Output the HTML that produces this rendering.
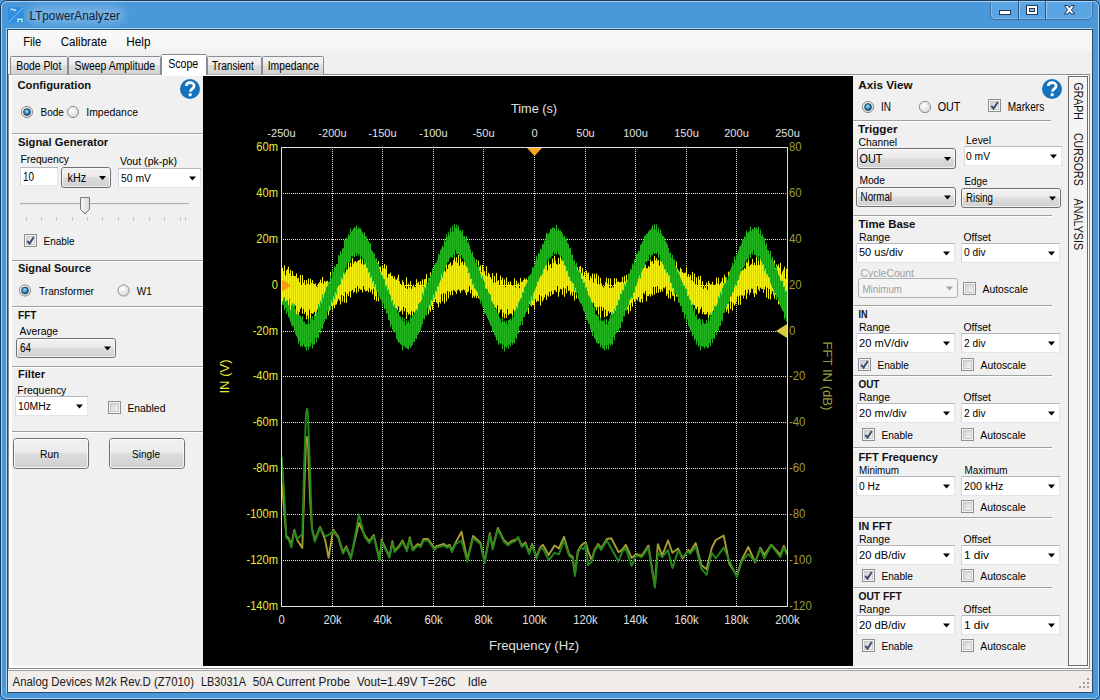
<!DOCTYPE html>
<html><head><meta charset="utf-8"><title>LTpowerAnalyzer</title>
<style>html,body{margin:0;padding:0;width:1100px;height:700px;overflow:hidden;background:#4a98da;}
svg{display:block;font-family:"Liberation Sans",sans-serif;}</style></head>
<body><svg width="1100" height="700" viewBox="0 0 1100 700">
<defs>
<linearGradient id="gbtn" x1="0" y1="0" x2="0" y2="1"><stop offset="0" stop-color="#f2f2f2"/><stop offset="0.45" stop-color="#ebebeb"/><stop offset="0.5" stop-color="#dddddd"/><stop offset="1" stop-color="#cfcfcf"/></linearGradient>
<linearGradient id="gchk" x1="0" y1="0" x2="1" y2="1"><stop offset="0" stop-color="#cbcfd5"/><stop offset="1" stop-color="#f6f6f6"/></linearGradient>
<radialGradient id="grad_rb" cx="0.4" cy="0.35" r="0.7"><stop offset="0" stop-color="#ffffff"/><stop offset="1" stop-color="#d4d4d4"/></radialGradient>
<radialGradient id="grad_rdot" cx="0.45" cy="0.4" r="0.6"><stop offset="0" stop-color="#a6e0fa"/><stop offset="0.55" stop-color="#3f93c4"/><stop offset="1" stop-color="#0f3a5e"/></radialGradient>
<linearGradient id="gtitle" x1="0" y1="0" x2="0" y2="1"><stop offset="0" stop-color="#5aa2de"/><stop offset="0.5" stop-color="#4a98da"/><stop offset="1" stop-color="#4896d8"/></linearGradient>
<linearGradient id="gtab" x1="0" y1="0" x2="0" y2="1"><stop offset="0" stop-color="#f2f2f2"/><stop offset="0.5" stop-color="#ebebeb"/><stop offset="0.5" stop-color="#dddddd"/><stop offset="1" stop-color="#cfcfcf"/></linearGradient>
<filter id="blur4" x="-30%" y="-60%" width="160%" height="220%"><feGaussianBlur stdDeviation="4"/></filter><linearGradient id="gmenu" x1="0" y1="0" x2="0" y2="1"><stop offset="0" stop-color="#f8f8f8"/><stop offset="0.7" stop-color="#f6f6f6"/><stop offset="1" stop-color="#eeeeee"/></linearGradient><linearGradient id="gtab2" x1="0" y1="0" x2="0" y2="1"><stop offset="0" stop-color="#f3f3f3"/><stop offset="0.5" stop-color="#ebebeb"/><stop offset="0.5" stop-color="#dedede"/><stop offset="1" stop-color="#d1d1d1"/></linearGradient><linearGradient id="gthumb" x1="0" y1="0" x2="1" y2="0"><stop offset="0" stop-color="#f8f8f8"/><stop offset="1" stop-color="#d8d8d8"/></linearGradient>
</defs>
<rect x="0" y="0" width="1100" height="700" fill="#4a98da"/>
<rect x="0.5" y="0.5" width="1099" height="699" rx="6" fill="#4a97d9" stroke="#1b3a58"/>
<rect x="1.5" y="1.5" width="1097" height="697" rx="5" fill="none" stroke="#a9d3f5"/>
<rect x="6.5" y="28.5" width="1086" height="664" fill="none" stroke="#a9d3f5"/>
<rect x="7.5" y="29.5" width="1084" height="662" fill="none" stroke="#2a4c6b"/>
<rect x="8" y="30" width="1084" height="662" fill="#f0f0f0"/>
<rect x="8" y="7" width="16" height="16" fill="#2f8ee2"/>
<path d="M8.5,22.5 L23.5,7.5" stroke="#7cc4ff" stroke-width="1"/>
<path d="M10.5,9.8 q1.5,-1.2 3,0 q1.2,1 2.5,0" stroke="#d8f4e8" stroke-width="1.2" fill="none"/>
<rect x="17" y="18.6" width="6" height="1.5" fill="#b8f8dc"/><rect x="17" y="20.8" width="2" height="1.3" fill="#b8f8dc"/><rect x="21" y="20.8" width="2" height="1.3" fill="#b8f8dc"/>
<rect x="28" y="7" width="96" height="16" rx="8" fill="#9ccbf0" opacity="0.55" filter="url(#blur4)"/>
<text x="29.50" y="19.50" font-size="13.08" fill="#101c2c" textLength="90.53" lengthAdjust="spacingAndGlyphs">LTpowerAnalyzer</text>
<path d="M990.5,2 V14 q0,5.5 5.5,5.5 H1087 q5.5,0 5.5,-5.5 V2" fill="#5aa4e4" stroke="#2b5679" stroke-opacity="0.6"/>
<path d="M991.5,2 V14 q0,4.5 4.5,4.5 H1087 q4.5,0 4.5,-4.5 V2" fill="none" stroke="#9ccaef" stroke-opacity="0.6"/>
<rect x="1018" y="1" width="1" height="18" fill="#2b5679"/>
<rect x="1019" y="1" width="1" height="18" fill="#9ccaef"/>
<rect x="1045" y="1" width="1" height="18" fill="#2b5679"/>
<rect x="1046" y="1" width="1" height="18" fill="#9ccaef"/>
<rect x="999.5" y="10.5" width="11" height="4" fill="#fff" stroke="#253a55"/>
<rect x="1026.5" y="5.5" width="11" height="9" fill="#fff" stroke="#253a55"/>
<rect x="1029.5" y="8.5" width="5" height="3" fill="#9fb5d0" stroke="#253a55"/>
<path d="M1064.5,5.5 H1068 L1069.5,7.8 L1071,5.5 H1074.5 L1071.4,9.8 L1074.5,14 H1071 L1069.5,11.8 L1068,14 H1064.5 L1067.6,9.8 Z" fill="#fff" stroke="#253a55" stroke-width="1"/>
<rect x="8" y="30" width="1084" height="25" fill="url(#gmenu)"/>
<text x="23.25" y="46.25" font-size="13.08" fill="#000" textLength="18.02" lengthAdjust="spacingAndGlyphs">File</text>
<text x="60.75" y="46.25" font-size="13.08" fill="#000" textLength="46.27" lengthAdjust="spacingAndGlyphs">Calibrate</text>
<text x="126.25" y="46.25" font-size="13.08" fill="#000" textLength="24.27" lengthAdjust="spacingAndGlyphs">Help</text>
<rect x="8.5" y="74.5" width="1081" height="594" fill="#ffffff" stroke="#898c95"/>
<path d="M10.5,74.5 V57.5 q0,-1 1,-1 H66.5 q1,0 1,1 V74.5" fill="url(#gtab2)" stroke="#898c95"/>
<text x="16.25" y="70.00" font-size="13.08" fill="#000" textLength="45.02" lengthAdjust="spacingAndGlyphs">Bode Plot</text>
<path d="M68.5,74.5 V57.5 q0,-1 1,-1 H159.5 q1,0 1,1 V74.5" fill="url(#gtab2)" stroke="#898c95"/>
<text x="74.50" y="70.00" font-size="13.08" fill="#000" textLength="80.52" lengthAdjust="spacingAndGlyphs">Sweep Amplitude</text>
<path d="M207.5,74.5 V57.5 q0,-1 1,-1 H260.5 q1,0 1,1 V74.5" fill="url(#gtab2)" stroke="#898c95"/>
<text x="212.00" y="70.00" font-size="13.08" fill="#000" textLength="41.77" lengthAdjust="spacingAndGlyphs">Transient</text>
<path d="M262.5,74.5 V57.5 q0,-1 1,-1 H322.5 q1,0 1,1 V74.5" fill="url(#gtab2)" stroke="#898c95"/>
<text x="267.70" y="70.00" font-size="13.08" fill="#000" textLength="51.28" lengthAdjust="spacingAndGlyphs">Impedance</text>
<path d="M161.5,75 V55.5 q0,-1 1,-1 H205.5 q1,0 1,1 V75" fill="#ffffff" stroke="#898c95"/>
<text x="168.25" y="68.00" font-size="13.08" fill="#000" textLength="30.01" lengthAdjust="spacingAndGlyphs">Scope</text>
<rect x="12" y="76" width="191" height="590" fill="#f0f0f0"/>
<text x="17.50" y="89.25" font-size="11.63" font-weight="bold" fill="#111" textLength="73.74" lengthAdjust="spacingAndGlyphs">Configuration</text>
<circle cx="190" cy="89" r="10" fill="#1a72b8"/>
<circle cx="190" cy="89" r="9" fill="#1673bb"/>
<path d="M186.3,86.1 C186.3,81.6 194.1,81.6 194.1,85.9 C194.1,88.6 190.5,89.1 190.3,91.7" fill="none" stroke="#fff" stroke-width="2.7" stroke-linecap="butt"/>
<rect x="188.7" y="93.2" width="3" height="3" rx="0.6" fill="#fff"/>
<circle cx="27" cy="112" r="5.6" fill="url(#grad_rb)" stroke="#8f8f8f" stroke-width="1"/>
<circle cx="27" cy="112" r="3.4" fill="url(#grad_rdot)" stroke="#123c5e" stroke-width="0.8"/>
<text x="40.50" y="116.25" font-size="11.63" fill="#000" textLength="23.26" lengthAdjust="spacingAndGlyphs">Bode</text>
<circle cx="73" cy="112" r="5.6" fill="url(#grad_rb)" stroke="#8f8f8f" stroke-width="1"/>
<text x="86.25" y="116.25" font-size="11.63" fill="#000" textLength="51.73" lengthAdjust="spacingAndGlyphs">Impedance</text>
<rect x="12" y="133" width="191" height="1" fill="#a0a0a0"/>
<rect x="12" y="134" width="191" height="1" fill="#ffffff"/>
<text x="18.00" y="145.50" font-size="10.90" font-weight="bold" fill="#111" textLength="90.22" lengthAdjust="spacingAndGlyphs">Signal Generator</text>
<text x="20.50" y="162.50" font-size="11.63" fill="#000" textLength="48.50" lengthAdjust="spacingAndGlyphs">Frequency</text>
<text x="120.00" y="165.00" font-size="11.63" fill="#000" textLength="57.01" lengthAdjust="spacingAndGlyphs">Vout (pk-pk)</text>
<rect x="20" y="167" width="38" height="19" fill="#ffffff"/>
<rect x="20.5" y="167.5" width="37" height="18" fill="none" stroke="#e3e5ea"/>
<rect x="20" y="167" width="38" height="1" fill="#b4b6bc"/>
<rect x="20" y="167" width="1" height="19" fill="#d6d8dd"/>
<text x="23.00" y="181.00" font-size="12.35" fill="#000" textLength="11.02" lengthAdjust="spacingAndGlyphs">10</text>
<rect x="61.5" y="167.5" width="49" height="20" rx="2.5" fill="url(#gbtn)" stroke="#707070"/>
<rect x="62.5" y="168.5" width="47" height="18" rx="1.5" fill="none" stroke="#fcfcfc" stroke-opacity="0.7"/>
<path d="M99.0,176.0 h7 l-3.5,4 z" fill="#000"/>
<text x="67.50" y="181.50" font-size="12.35" fill="#000" textLength="18.52" lengthAdjust="spacingAndGlyphs">kHz</text>
<rect x="118" y="168" width="83" height="20" fill="#ffffff"/>
<rect x="118.5" y="168.5" width="82" height="19" fill="none" stroke="#e3e5ea"/>
<rect x="118" y="168" width="83" height="1" fill="#b4b6bc"/>
<rect x="118" y="168" width="1" height="20" fill="#d6d8dd"/>
<path d="M189.0,176.5 h7 l-3.5,4 z" fill="#000"/>
<text x="121.00" y="182.00" font-size="11.63" fill="#000" textLength="30.00" lengthAdjust="spacingAndGlyphs">50 mV</text>
<rect x="20" y="203" width="169" height="1" fill="#b0b0b0"/>
<rect x="20" y="204" width="169" height="1" fill="#e8e8e8"/>
<path d="M80.5,197.5 h9 v12 l-4.5,4.5 l-4.5,-4.5 z" fill="url(#gthumb)" stroke="#777"/>
<rect x="26" y="217" width="1" height="4" fill="#c4c4c4"/>
<rect x="41" y="217" width="1" height="4" fill="#c4c4c4"/>
<rect x="56" y="217" width="1" height="4" fill="#c4c4c4"/>
<rect x="72" y="217" width="1" height="4" fill="#c4c4c4"/>
<rect x="87" y="217" width="1" height="4" fill="#c4c4c4"/>
<rect x="102" y="217" width="1" height="4" fill="#c4c4c4"/>
<rect x="118" y="217" width="1" height="4" fill="#c4c4c4"/>
<rect x="133" y="217" width="1" height="4" fill="#c4c4c4"/>
<rect x="149" y="217" width="1" height="4" fill="#c4c4c4"/>
<rect x="164" y="217" width="1" height="4" fill="#c4c4c4"/>
<rect x="180" y="217" width="1" height="4" fill="#c4c4c4"/>
<rect x="185" y="217" width="1" height="4" fill="#c4c4c4"/>
<rect x="24.5" y="234.5" width="12" height="12" fill="#f4f4f4" stroke="#8f8f8f"/>
<rect x="26.5" y="236.5" width="8" height="8" fill="url(#gchk)" stroke="#c9c9c9" stroke-width="1"/>
<path d="M27.3,240.8 L29.6,243.6 L33.8,237" fill="none" stroke="#3a4a70" stroke-width="1.9"/>
<text x="43.50" y="245.00" font-size="11.63" fill="#000" textLength="30.99" lengthAdjust="spacingAndGlyphs">Enable</text>
<rect x="12" y="260" width="191" height="1" fill="#a0a0a0"/>
<rect x="12" y="261" width="191" height="1" fill="#ffffff"/>
<text x="18.00" y="272.00" font-size="10.90" font-weight="bold" fill="#111" textLength="72.98" lengthAdjust="spacingAndGlyphs">Signal Source</text>
<circle cx="25" cy="290.5" r="5.6" fill="url(#grad_rb)" stroke="#8f8f8f" stroke-width="1"/>
<circle cx="25" cy="290.5" r="3.4" fill="url(#grad_rdot)" stroke="#123c5e" stroke-width="0.8"/>
<text x="39.00" y="294.50" font-size="11.63" fill="#000" textLength="54.98" lengthAdjust="spacingAndGlyphs">Transformer</text>
<circle cx="123.6" cy="290.5" r="5.6" fill="url(#grad_rb)" stroke="#8f8f8f" stroke-width="1"/>
<text x="136.80" y="294.50" font-size="11.63" fill="#000" textLength="15.00" lengthAdjust="spacingAndGlyphs">W1</text>
<rect x="12" y="306" width="191" height="1" fill="#a0a0a0"/>
<rect x="12" y="307" width="191" height="1" fill="#ffffff"/>
<text x="18.00" y="319.00" font-size="10.90" font-weight="bold" fill="#111" textLength="18.48" lengthAdjust="spacingAndGlyphs">FFT</text>
<text x="19.50" y="334.80" font-size="11.63" fill="#000" textLength="38.52" lengthAdjust="spacingAndGlyphs">Average</text>
<rect x="16.5" y="338.5" width="99" height="19" rx="2.5" fill="url(#gbtn)" stroke="#707070"/>
<rect x="17.5" y="339.5" width="97" height="17" rx="1.5" fill="none" stroke="#fcfcfc" stroke-opacity="0.7"/>
<path d="M104.0,346.5 h7 l-3.5,4 z" fill="#000"/>
<text x="20.00" y="352.00" font-size="12.35" fill="#000" textLength="11.02" lengthAdjust="spacingAndGlyphs">64</text>
<rect x="12" y="366" width="191" height="1" fill="#a0a0a0"/>
<rect x="12" y="367" width="191" height="1" fill="#ffffff"/>
<text x="18.00" y="378.00" font-size="10.90" font-weight="bold" fill="#111" textLength="27.00" lengthAdjust="spacingAndGlyphs">Filter</text>
<text x="17.30" y="393.60" font-size="11.63" fill="#000" textLength="49.00" lengthAdjust="spacingAndGlyphs">Frequency</text>
<rect x="15" y="396" width="73" height="20" fill="#ffffff"/>
<rect x="15.5" y="396.5" width="72" height="19" fill="none" stroke="#e3e5ea"/>
<rect x="15" y="396" width="73" height="1" fill="#b4b6bc"/>
<rect x="15" y="396" width="1" height="20" fill="#d6d8dd"/>
<path d="M76.0,404.5 h7 l-3.5,4 z" fill="#000"/>
<text x="18.00" y="410.00" font-size="11.63" fill="#000" textLength="32.97" lengthAdjust="spacingAndGlyphs">10MHz</text>
<rect x="108.5" y="401.5" width="12" height="12" fill="#f4f4f4" stroke="#8f8f8f"/>
<rect x="110.5" y="403.5" width="8" height="8" fill="url(#gchk)" stroke="#c9c9c9" stroke-width="1"/>
<text x="127.40" y="412.00" font-size="11.63" fill="#000" textLength="38.00" lengthAdjust="spacingAndGlyphs">Enabled</text>
<rect x="12" y="431" width="191" height="1" fill="#a0a0a0"/>
<rect x="12" y="432" width="191" height="1" fill="#ffffff"/>
<rect x="13.5" y="438.5" width="75" height="30" rx="3" fill="url(#gbtn)" stroke="#707070"/>
<rect x="14.5" y="439.5" width="73" height="28" rx="2" fill="none" stroke="#fcfcfc" stroke-opacity="0.8"/>
<text x="40.00" y="457.50" font-size="11.63" fill="#000" textLength="19.00" lengthAdjust="spacingAndGlyphs">Run</text>
<rect x="109.5" y="438.5" width="75" height="30" rx="3" fill="url(#gbtn)" stroke="#707070"/>
<rect x="110.5" y="439.5" width="73" height="28" rx="2" fill="none" stroke="#fcfcfc" stroke-opacity="0.8"/>
<text x="132.00" y="457.50" font-size="11.63" fill="#000" textLength="28.00" lengthAdjust="spacingAndGlyphs">Single</text>
<rect x="203" y="76" width="650" height="590" fill="#000000"/>
<path d="M332.5,147 V606 M382.5,147 V606 M433.5,147 V606 M483.5,147 V606 M534.5,147 V606 M585.5,147 V606 M635.5,147 V606 M686.5,147 V606 M736.5,147 V606 M281,193.5 H787 M281,239.5 H787 M281,285.5 H787 M281,331.5 H787 M281,376.5 H787 M281,422.5 H787 M281,468.5 H787 M281,514.5 H787 M281,560.5 H787" stroke="#e8e8e8" stroke-width="1" stroke-dasharray="1,1" fill="none"/>
<clipPath id="plotclip"><rect x="281" y="147" width="507" height="460"/></clipPath>
<g clip-path="url(#plotclip)">
<path d="M282.5,267.9V301.1M284.5,265.6V297.1M286.5,270.6V300.9M288.5,266.8V305.0M290.5,270.0V309.8M292.5,271.2V303.1M294.5,276.1V303.9M296.5,273.6V314.2M298.5,277.9V314.8M300.5,274.9V308.8M302.5,275.3V313.8M304.5,280.0V314.1M306.5,280.1V319.3M308.5,278.4V320.5M310.5,278.8V320.6M312.5,280.2V313.9M314.5,284.2V311.8M316.5,286.5V319.3M318.5,283.4V318.7M320.5,279.7V310.4M322.5,276.8V319.1M324.5,280.9V309.4M326.5,281.1V312.4M328.5,282.2V315.2M330.5,272.1V309.6M332.5,272.7V310.3M334.5,268.9V308.1M336.5,273.7V304.5M338.5,269.1V298.9M340.5,273.9V304.5M342.5,265.4V301.7M344.5,263.3V302.6M346.5,262.2V303.0M348.5,261.7V296.1M350.5,262.7V297.6M352.5,258.1V289.9M354.5,261.5V291.9M356.5,262.3V293.4M358.5,260.3V291.8M360.5,255.2V289.6M362.5,254.9V292.4M364.5,257.9V289.7M366.5,261.7V291.0M368.5,256.1V292.2M370.5,256.8V292.1M372.5,260.8V294.3M374.5,267.3V299.9M376.5,262.6V301.1M378.5,261.0V301.4M380.5,266.6V298.3M382.5,265.0V299.2M384.5,263.9V304.5M386.5,265.4V305.0M388.5,273.8V303.8M390.5,272.6V311.0M392.5,275.8V311.8M394.5,276.2V307.0M396.5,279.6V314.0M398.5,274.6V306.4M400.5,283.8V311.5M402.5,280.3V314.5M404.5,285.6V311.4M406.5,277.2V319.1M408.5,283.5V314.7M410.5,281.2V315.5M412.5,286.3V317.4M414.5,286.8V313.4M416.5,279.2V315.4M418.5,281.8V314.9M420.5,281.2V317.3M422.5,279.3V316.5M424.5,279.3V317.1M426.5,274.1V315.3M428.5,280.3V314.3M430.5,272.3V311.7M432.5,277.8V309.7M434.5,269.5V302.0M436.5,267.2V302.5M438.5,273.0V307.3M440.5,263.6V303.6M442.5,263.6V301.5M444.5,262.4V303.6M446.5,262.7V301.4M448.5,264.6V298.4M450.5,262.3V295.3M452.5,264.8V295.3M454.5,257.2V290.8M456.5,257.2V293.9M458.5,255.0V289.5M460.5,254.7V293.1M462.5,261.4V290.5M464.5,260.0V290.3M466.5,260.5V295.2M468.5,258.2V291.6M470.5,259.8V293.6M472.5,262.1V298.0M474.5,261.5V297.5M476.5,259.7V298.3M478.5,260.7V298.1M480.5,265.3V297.7M482.5,264.9V305.7M484.5,271.2V300.9M486.5,266.4V308.3M488.5,272.8V305.7M490.5,277.0V310.8M492.5,273.2V310.9M494.5,275.9V310.6M496.5,272.9V311.0M498.5,280.1V314.6M500.5,275.5V309.7M502.5,277.6V317.3M504.5,279.4V318.4M506.5,277.5V317.9M508.5,281.9V315.2M510.5,281.5V313.5M512.5,285.5V320.2M514.5,278.3V312.9M516.5,280.6V316.9M518.5,282.7V312.5M520.5,277.9V315.7M522.5,281.6V313.3M524.5,278.1V310.8M526.5,278.6V311.4M528.5,277.1V314.0M530.5,278.7V305.4M532.5,276.1V305.0M534.5,268.6V308.9M536.5,270.7V302.1M538.5,271.4V301.2M540.5,264.2V305.6M542.5,264.9V301.5M544.5,262.4V297.4M546.5,261.8V300.1M548.5,260.2V296.8M550.5,263.8V296.1M552.5,258.5V294.4M554.5,255.8V290.2M556.5,263.9V292.2M558.5,257.9V296.7M560.5,256.4V288.9M562.5,254.6V294.8M564.5,255.7V296.8M566.5,256.4V293.5M568.5,264.0V291.1M570.5,258.1V295.4M572.5,262.7V295.7M574.5,265.2V300.5M576.5,264.2V298.6M578.5,270.7V296.6M580.5,266.0V297.9M582.5,268.0V299.0M584.5,272.1V303.9M586.5,270.5V304.7M588.5,272.5V306.1M590.5,276.0V304.0M592.5,273.4V308.4M594.5,273.9V309.0M596.5,273.5V310.5M598.5,275.6V314.8M600.5,277.8V318.5M602.5,286.0V310.8M604.5,286.2V317.4M606.5,277.6V316.3M608.5,278.3V311.2M610.5,278.4V312.2M612.5,286.3V315.8M614.5,278.1V313.2M616.5,278.4V316.7M618.5,281.4V312.9M620.5,282.1V311.4M622.5,276.9V312.9M624.5,275.8V307.1M626.5,274.9V307.3M628.5,273.8V313.7M630.5,270.3V311.1M632.5,277.1V306.7M634.5,270.0V301.8M636.5,271.8V299.3M638.5,266.9V297.0M640.5,269.1V302.2M642.5,263.8V302.7M644.5,266.9V294.1M646.5,268.1V301.5M648.5,265.9V296.1M650.5,259.2V296.7M652.5,261.0V295.5M654.5,256.0V294.7M656.5,258.1V293.0M658.5,259.7V292.9M660.5,256.1V292.1M662.5,261.1V291.6M664.5,259.1V288.6M666.5,255.2V295.8M668.5,258.5V298.2M670.5,256.5V298.8M672.5,258.8V295.5M674.5,264.3V301.2M676.5,261.5V296.8M678.5,270.3V302.3M680.5,267.7V303.7M682.5,272.1V301.1M684.5,272.9V306.9M686.5,266.7V309.3M688.5,274.0V307.3M690.5,275.0V312.1M692.5,271.8V313.1M694.5,273.8V305.6M696.5,277.3V309.4M698.5,276.4V313.7M700.5,275.8V309.3M702.5,281.2V314.1M704.5,285.8V314.4M706.5,282.5V314.2M708.5,280.9V318.4M710.5,284.7V312.9M712.5,281.8V319.6M714.5,285.1V310.5M716.5,277.6V315.7M718.5,277.6V316.3M720.5,282.9V311.2M722.5,277.9V312.7M724.5,274.6V312.1M726.5,277.7V311.5M728.5,271.7V313.5M730.5,272.4V309.0M732.5,269.7V310.5M734.5,271.3V305.7M736.5,267.2V300.8M738.5,268.2V305.3M740.5,261.8V304.8M742.5,266.4V295.6M744.5,267.8V295.5M746.5,261.6V299.2M748.5,258.1V289.7M750.5,264.9V292.7M752.5,258.8V288.9M754.5,262.5V297.0M756.5,256.8V294.5M758.5,255.9V289.5M760.5,255.0V287.6M762.5,259.4V288.8M764.5,260.8V289.5M766.5,260.5V297.6M768.5,256.1V299.0M770.5,262.0V299.6M772.5,263.5V291.0M774.5,260.3V298.7M776.5,264.5V299.7M778.5,264.5V304.4M780.5,262.9V305.1M782.5,271.4V298.5M784.5,266.6V301.0M786.5,268.8V310.9" stroke="#f8f212" stroke-width="1" fill="none"/>
<path d="M283.5,271.2V298.0M285.5,275.6V301.4M287.5,269.2V300.0M289.5,273.5V298.9M291.5,276.0V305.2M293.5,275.6V305.4M295.5,276.1V305.9M297.5,278.7V310.8M299.5,282.1V312.1M301.5,285.8V307.4M303.5,282.8V309.0M305.5,285.9V312.0M307.5,283.9V315.4M309.5,284.5V309.7M311.5,283.0V313.2M313.5,283.7V313.2M315.5,283.3V316.5M317.5,286.6V309.5M319.5,282.3V308.2M321.5,282.8V309.9M323.5,283.7V314.5M325.5,281.9V305.8M327.5,280.7V305.7M329.5,281.8V310.9M331.5,279.2V306.1M333.5,277.0V305.5M335.5,276.5V304.8M337.5,270.6V301.7M339.5,273.6V300.7M341.5,270.4V295.0M343.5,268.6V295.9M345.5,272.5V292.1M347.5,269.4V293.9M349.5,267.3V291.6M351.5,266.7V291.0M353.5,263.7V292.9M355.5,261.1V288.1M357.5,261.3V286.3M359.5,259.9V288.5M361.5,263.7V290.0M363.5,264.6V285.6M365.5,260.0V291.6M367.5,260.3V290.4M369.5,266.2V288.2M371.5,265.1V289.9M373.5,261.3V288.7M375.5,262.6V296.4M377.5,263.3V291.5M379.5,266.7V295.1M381.5,271.5V292.9M383.5,268.3V294.2M385.5,268.8V302.5M387.5,277.7V302.8M389.5,274.0V302.5M391.5,275.9V302.6M393.5,278.4V307.5M395.5,279.4V309.2M397.5,277.6V310.4M399.5,281.1V312.0M401.5,285.1V310.3M403.5,282.0V306.9M405.5,288.0V308.2M407.5,288.9V312.2M409.5,287.2V313.7M411.5,288.8V311.3M413.5,284.6V311.7M415.5,287.1V313.4M417.5,283.2V313.2M419.5,285.1V313.3M421.5,284.6V308.9M423.5,286.8V309.5M425.5,278.7V308.1M427.5,283.0V307.7M429.5,278.4V309.8M431.5,276.5V305.9M433.5,280.9V301.1M435.5,278.7V299.2M437.5,277.7V303.7M439.5,270.9V302.1M441.5,268.5V294.2M443.5,267.7V293.3M445.5,271.6V293.7M447.5,268.9V291.2M449.5,263.7V291.7M451.5,265.9V290.9M453.5,260.1V289.9M455.5,261.7V291.9M457.5,262.9V290.4M459.5,265.7V290.9M461.5,262.8V290.4M463.5,264.8V289.4M465.5,261.0V292.7M467.5,263.6V292.3M469.5,265.7V286.3M471.5,266.8V289.8M473.5,267.9V295.8M475.5,266.4V295.7M477.5,267.4V296.0M479.5,266.7V299.2M481.5,272.1V298.7M483.5,268.5V296.4M485.5,275.4V301.6M487.5,276.4V304.4M489.5,274.1V299.6M491.5,279.1V303.3M493.5,282.8V304.5M495.5,282.5V307.9M497.5,281.1V305.3M499.5,285.8V312.6M501.5,280.1V309.4M503.5,286.2V312.7M505.5,287.2V313.9M507.5,285.5V309.2M509.5,284.4V314.0M511.5,285.2V313.7M513.5,285.0V309.6M515.5,287.3V314.2M517.5,284.2V311.7M519.5,288.2V313.1M521.5,282.0V309.5M523.5,279.9V306.0M525.5,279.6V307.5M527.5,280.2V309.7M529.5,282.3V304.3M531.5,275.5V306.6M533.5,276.9V305.3M535.5,274.0V299.0M537.5,273.0V300.8M539.5,269.5V295.0M541.5,266.7V296.4M543.5,267.8V299.7M545.5,264.7V294.4M547.5,270.4V295.4M549.5,265.1V291.8M551.5,268.1V291.1M553.5,263.1V294.0M555.5,260.7V290.6M557.5,264.8V285.7M559.5,263.8V291.8M561.5,259.5V289.5M563.5,260.5V287.6M565.5,259.8V288.7M567.5,266.3V286.0M569.5,266.5V290.4M571.5,265.2V292.5M573.5,263.4V291.5M575.5,264.8V292.4M577.5,267.0V292.5M579.5,266.8V293.3M581.5,272.9V294.9M583.5,275.8V295.9M585.5,277.0V296.7M587.5,273.4V298.5M589.5,280.3V307.3M591.5,278.2V302.3M593.5,282.4V302.8M595.5,278.4V307.4M597.5,284.0V307.0M599.5,284.3V306.6M601.5,283.3V306.8M603.5,287.5V307.8M605.5,282.3V309.7M607.5,283.5V315.8M609.5,287.8V313.5M611.5,288.0V315.5M613.5,287.4V314.0M615.5,283.8V314.1M617.5,281.8V310.7M619.5,282.2V311.0M621.5,281.7V311.1M623.5,282.6V306.5M625.5,281.5V310.3M627.5,282.1V309.7M629.5,275.6V305.2M631.5,278.5V303.1M633.5,272.0V299.5M635.5,277.5V302.4M637.5,275.4V300.8M639.5,273.3V301.9M641.5,270.3V299.0M643.5,268.0V292.8M645.5,264.4V290.9M647.5,268.3V295.9M649.5,267.1V294.3M651.5,261.9V293.8M653.5,263.8V286.9M655.5,260.3V287.0M657.5,260.7V285.6M659.5,265.8V289.1M661.5,261.2V289.6M663.5,258.5V287.6M665.5,265.1V286.7M667.5,260.3V293.9M669.5,263.8V290.1M671.5,261.3V291.6M673.5,261.9V296.2M675.5,269.6V290.7M677.5,268.2V296.4M679.5,271.5V296.2M681.5,269.1V296.5M683.5,273.3V296.3M685.5,272.5V305.0M687.5,276.7V300.0M689.5,276.9V304.5M691.5,280.3V305.3M693.5,281.6V304.9M695.5,284.2V308.4M697.5,286.1V306.9M699.5,279.7V312.6M701.5,286.9V307.2M703.5,288.8V312.1M705.5,287.8V314.7M707.5,289.8V312.0M709.5,283.0V315.1M711.5,284.2V315.0M713.5,285.6V310.7M715.5,284.4V315.3M717.5,283.5V315.0M719.5,284.7V310.9M721.5,281.6V313.9M723.5,283.2V308.5M725.5,277.1V304.9M727.5,280.1V309.2M729.5,277.1V301.3M731.5,276.6V301.8M733.5,278.2V303.4M735.5,270.3V304.3M737.5,268.6V296.5M739.5,272.0V295.7M741.5,270.6V295.3M743.5,269.8V298.6M745.5,269.0V290.1M747.5,262.8V293.4M749.5,266.3V295.0M751.5,263.9V288.6M753.5,265.2V293.4M755.5,265.3V293.1M757.5,265.3V285.2M759.5,264.8V291.3M761.5,258.7V289.1M763.5,263.5V293.0M765.5,265.9V286.6M767.5,267.0V287.8M769.5,260.5V289.1M771.5,265.4V293.8M773.5,267.6V295.3M775.5,267.9V294.8M777.5,266.2V293.5M779.5,267.5V294.7M781.5,274.4V296.9M783.5,269.4V299.6M785.5,278.7V304.8" stroke="#d8d008" stroke-width="1" fill="none"/>
<path d="M282.5,271.7V304.7M284.5,276.1V310.3M286.5,280.2V314.1M288.5,287.1V317.1M290.5,294.9V321.9M292.5,295.8V326.5M294.5,301.2V331.0M296.5,307.9V336.1M298.5,311.7V343.4M300.5,315.9V346.8M302.5,315.8V346.6M304.5,321.5V346.8M306.5,324.0V350.7M308.5,319.3V349.8M310.5,318.4V346.5M312.5,315.9V348.6M314.5,314.4V344.7M316.5,311.6V342.7M318.5,303.8V338.5M320.5,300.7V333.3M322.5,294.7V328.9M324.5,293.3V321.7M326.5,286.8V319.2M328.5,282.0V310.8M330.5,275.4V309.6M332.5,269.4V302.9M334.5,266.0V299.2M336.5,264.1V294.7M338.5,255.2V286.0M340.5,251.0V284.3M342.5,248.6V279.5M344.5,240.0V274.7M346.5,237.6V269.7M348.5,234.1V262.6M350.5,228.6V261.5M352.5,230.3V256.9M354.5,227.2V257.3M356.5,225.3V256.2M358.5,227.3V255.5M360.5,228.3V259.0M362.5,232.4V259.9M364.5,232.5V264.3M366.5,236.7V267.6M368.5,240.9V272.8M370.5,242.9V278.0M372.5,251.4V282.5M374.5,253.8V287.0M376.5,258.4V291.3M378.5,264.0V297.1M380.5,272.2V299.0M382.5,275.7V306.5M384.5,279.3V309.2M386.5,285.0V313.8M388.5,289.2V319.9M390.5,295.3V327.1M392.5,300.0V329.9M394.5,304.3V332.2M396.5,308.0V338.5M398.5,310.9V342.7M400.5,316.4V344.2M402.5,316.6V350.3M404.5,318.6V346.5M406.5,320.5V348.0M408.5,320.8V349.4M410.5,316.5V347.8M412.5,315.3V344.9M414.5,312.6V342.1M416.5,309.2V339.1M418.5,303.9V333.9M420.5,301.9V330.4M422.5,292.7V324.1M424.5,287.0V319.4M426.5,283.4V315.9M428.5,278.0V309.5M430.5,275.2V305.7M432.5,268.3V301.1M434.5,264.6V297.6M436.5,262.5V292.1M438.5,253.6V286.5M440.5,250.1V280.5M442.5,245.7V277.5M444.5,239.3V271.0M446.5,234.2V265.0M448.5,232.3V262.1M450.5,228.0V257.2M452.5,226.0V257.8M454.5,224.2V257.6M456.5,224.6V253.7M458.5,225.6V254.1M460.5,229.9V258.6M462.5,229.9V258.3M464.5,236.1V262.0M466.5,236.1V266.8M468.5,241.6V273.3M470.5,249.3V279.0M472.5,251.6V284.8M474.5,257.8V288.3M476.5,261.5V291.0M478.5,265.5V296.2M480.5,273.7V303.5M482.5,275.9V306.4M484.5,282.0V313.8M486.5,288.7V315.7M488.5,292.5V320.4M490.5,294.7V325.5M492.5,302.2V331.4M494.5,306.1V334.8M496.5,308.7V340.6M498.5,313.4V344.7M500.5,319.2V344.4M502.5,317.7V349.0M504.5,320.8V351.5M506.5,321.0V347.8M508.5,320.2V348.7M510.5,318.6V346.5M512.5,315.7V344.8M514.5,311.2V343.3M516.5,306.5V339.3M518.5,302.7V333.8M520.5,298.4V325.4M522.5,292.3V325.2M524.5,287.1V317.3M526.5,283.7V312.1M528.5,276.4V308.1M530.5,274.7V304.8M532.5,267.1V300.7M534.5,264.7V291.4M536.5,255.7V286.3M538.5,253.0V281.4M540.5,248.5V276.4M542.5,244.5V274.1M544.5,240.7V268.6M546.5,232.6V265.6M548.5,233.9V261.7M550.5,228.9V259.0M552.5,227.6V256.1M554.5,228.1V254.3M556.5,224.8V254.5M558.5,228.3V254.5M560.5,230.2V256.7M562.5,233.3V261.3M564.5,235.6V265.3M566.5,237.8V271.3M568.5,244.2V276.6M570.5,247.8V281.0M572.5,254.3V283.2M574.5,259.9V290.9M576.5,262.5V295.3M578.5,270.5V299.2M580.5,272.9V303.4M582.5,279.1V306.7M584.5,282.2V312.4M586.5,287.2V319.3M588.5,295.2V323.6M590.5,298.4V329.2M592.5,302.7V336.1M594.5,306.1V338.2M596.5,314.4V342.8M598.5,315.7V344.2M600.5,317.7V347.4M602.5,320.7V348.3M604.5,319.5V350.5M606.5,319.0V349.7M608.5,321.0V349.6M610.5,315.0V345.7M612.5,312.4V344.9M614.5,308.9V340.3M616.5,305.4V332.9M618.5,299.8V331.9M620.5,293.5V328.0M622.5,289.7V322.5M624.5,284.1V316.4M626.5,282.3V310.7M628.5,274.2V305.5M630.5,269.3V299.2M632.5,263.4V298.3M634.5,259.4V292.3M636.5,253.8V285.5M638.5,250.9V278.7M640.5,244.9V278.6M642.5,241.5V270.0M644.5,235.7V267.1M646.5,233.8V262.4M648.5,231.5V260.7M650.5,230.0V257.8M652.5,225.3V255.4M654.5,224.4V254.0M656.5,224.4V254.2M658.5,227.4V258.1M660.5,229.6V261.0M662.5,235.6V263.8M664.5,237.8V269.4M666.5,242.6V273.3M668.5,248.1V275.7M670.5,252.6V282.7M672.5,254.8V288.5M674.5,259.0V294.0M676.5,267.8V294.9M678.5,271.1V301.7M680.5,277.7V306.4M682.5,282.4V312.1M684.5,285.3V318.5M686.5,289.1V322.6M688.5,295.3V325.9M690.5,300.6V330.4M692.5,303.6V336.3M694.5,307.8V340.3M696.5,314.5V344.6M698.5,318.7V346.6M700.5,319.5V350.6M702.5,319.2V346.7M704.5,323.9V348.7M706.5,319.8V346.9M708.5,318.1V347.8M710.5,313.1V346.3M712.5,311.8V343.3M714.5,305.5V338.9M716.5,305.4V335.0M718.5,296.3V330.8M720.5,291.7V325.8M722.5,288.2V321.1M724.5,283.2V313.1M726.5,277.2V307.3M728.5,275.5V303.9M730.5,269.7V296.6M732.5,262.8V292.7M734.5,256.5V287.0M736.5,254.5V285.9M738.5,250.3V279.9M740.5,245.9V272.8M742.5,239.7V270.2M744.5,236.3V266.2M746.5,230.5V260.1M748.5,231.8V260.1M750.5,226.4V257.9M752.5,228.8V254.8M754.5,227.0V255.0M756.5,227.4V256.6M758.5,226.7V260.7M760.5,229.4V259.4M762.5,234.5V265.0M764.5,238.4V271.2M766.5,243.2V274.7M768.5,250.4V277.0M770.5,250.9V283.1M772.5,256.8V288.1M774.5,263.3V294.7M776.5,266.1V298.8M778.5,274.5V301.4M780.5,280.5V306.2M782.5,280.8V311.0M784.5,286.3V319.2M786.5,290.4V321.5" stroke="#22b41e" stroke-width="1" fill="none"/>
<path d="M283.5,276.0V305.4M285.5,284.4V308.2M287.5,285.4V311.5M289.5,291.9V318.5M291.5,298.1V325.1M293.5,300.7V326.4M295.5,309.0V334.4M297.5,309.1V338.6M299.5,315.1V341.5M301.5,317.8V345.8M303.5,321.9V344.4M305.5,323.9V347.5M307.5,324.4V346.4M309.5,323.6V346.8M311.5,318.7V343.4M313.5,320.3V344.5M315.5,316.8V338.0M317.5,311.8V337.3M319.5,306.6V331.2M321.5,302.9V328.3M323.5,298.3V324.3M325.5,290.7V319.2M327.5,286.0V311.5M329.5,283.2V305.8M331.5,278.0V300.5M333.5,272.0V296.4M335.5,266.9V292.4M337.5,263.8V287.8M339.5,255.7V284.9M341.5,253.6V277.6M343.5,247.9V272.8M345.5,240.3V268.1M347.5,238.3V262.9M349.5,235.2V262.2M351.5,231.8V256.0M353.5,228.5V255.9M355.5,227.6V253.7M357.5,229.3V253.4M359.5,228.1V254.4M361.5,230.2V256.0M363.5,234.5V259.3M365.5,236.1V263.6M367.5,239.6V267.9M369.5,243.4V271.9M371.5,249.8V276.0M373.5,252.8V280.8M375.5,258.7V284.3M377.5,264.0V290.4M379.5,269.0V296.7M381.5,274.8V301.2M383.5,278.8V303.4M385.5,286.3V308.7M387.5,290.6V313.2M389.5,293.7V320.7M391.5,301.4V324.8M393.5,305.8V331.5M395.5,308.2V332.7M397.5,312.6V340.6M399.5,315.4V342.7M401.5,319.4V345.0M403.5,321.6V345.8M405.5,325.2V347.6M407.5,322.8V349.0M409.5,323.3V345.5M411.5,317.8V346.6M413.5,314.6V342.0M415.5,310.7V338.5M417.5,310.3V335.0M419.5,302.7V331.4M421.5,300.1V327.1M423.5,295.2V318.6M425.5,288.7V315.1M427.5,283.1V308.5M429.5,279.2V304.6M431.5,274.6V299.9M433.5,271.7V294.5M435.5,262.9V290.9M437.5,260.0V286.1M439.5,254.8V282.7M441.5,248.2V274.5M443.5,247.0V272.5M445.5,241.6V267.7M447.5,236.8V262.4M449.5,234.9V258.9M451.5,232.1V257.0M453.5,231.4V254.5M455.5,227.8V250.4M457.5,228.2V254.8M459.5,230.8V256.2M461.5,232.2V255.2M463.5,236.4V259.5M465.5,237.9V265.0M467.5,242.8V267.5M469.5,245.1V272.5M471.5,253.5V278.5M473.5,256.6V283.5M475.5,262.9V289.0M477.5,267.9V292.2M479.5,270.7V298.4M481.5,278.4V300.9M483.5,279.7V307.4M485.5,288.4V313.4M487.5,289.2V318.2M489.5,294.1V323.0M491.5,300.6V326.5M493.5,305.4V331.2M495.5,309.0V336.9M497.5,313.0V340.1M499.5,317.1V342.8M501.5,322.3V343.5M503.5,321.6V344.7M505.5,323.1V347.0M507.5,324.5V345.5M509.5,319.6V344.3M511.5,320.2V342.7M513.5,317.4V342.6M515.5,310.4V337.7M517.5,308.5V333.4M519.5,300.9V326.4M521.5,298.3V321.2M523.5,292.7V317.3M525.5,286.1V314.2M527.5,281.4V310.2M529.5,275.2V301.1M531.5,272.8V296.4M533.5,267.5V292.9M535.5,260.8V288.6M537.5,258.8V281.7M539.5,253.8V278.3M541.5,249.9V276.0M543.5,243.6V269.2M545.5,240.7V264.8M547.5,233.6V259.3M549.5,232.3V257.5M551.5,229.1V256.5M553.5,227.4V251.7M555.5,230.6V253.6M557.5,230.8V251.4M559.5,230.8V255.5M561.5,232.0V255.9M563.5,236.7V259.7M565.5,238.8V265.9M567.5,243.1V270.6M569.5,248.3V277.1M571.5,255.0V281.4M573.5,260.8V283.5M575.5,264.8V287.9M577.5,270.9V292.8M579.5,272.0V301.7M581.5,278.8V303.9M583.5,283.0V310.9M585.5,288.2V312.9M587.5,291.3V320.7M589.5,296.4V324.2M591.5,302.0V331.1M593.5,307.4V331.9M595.5,314.3V340.0M597.5,316.2V343.2M599.5,320.4V342.9M601.5,320.7V345.1M603.5,321.1V348.7M605.5,324.0V345.7M607.5,324.5V345.2M609.5,318.5V343.7M611.5,316.5V344.2M613.5,314.2V337.0M615.5,310.8V334.7M617.5,305.6V330.2M619.5,300.4V328.2M621.5,294.1V321.8M623.5,290.6V316.5M625.5,286.1V309.2M627.5,279.8V307.4M629.5,273.4V300.3M631.5,269.3V297.2M633.5,264.7V293.1M635.5,261.9V286.7M637.5,253.4V281.9M639.5,251.2V275.3M641.5,244.0V272.4M643.5,240.5V267.4M645.5,235.6V261.6M647.5,233.3V260.9M649.5,230.0V254.8M651.5,228.0V255.5M653.5,229.1V252.7M655.5,229.7V253.1M657.5,231.7V252.2M659.5,232.8V254.8M661.5,233.3V260.4M663.5,236.1V265.3M665.5,241.0V269.4M667.5,244.7V272.1M669.5,252.6V275.2M671.5,257.7V283.2M673.5,259.5V288.0M675.5,265.3V294.0M677.5,272.8V295.5M679.5,274.8V302.8M681.5,280.3V306.0M683.5,286.0V312.3M685.5,288.4V314.5M687.5,296.3V319.7M689.5,299.2V328.2M691.5,305.1V332.0M693.5,310.7V334.8M695.5,316.0V339.1M697.5,319.5V341.7M699.5,318.3V345.4M701.5,324.4V346.1M703.5,322.4V346.7M705.5,323.4V346.6M707.5,322.9V348.3M709.5,321.1V343.1M711.5,315.9V339.2M713.5,312.3V338.0M715.5,306.9V331.3M717.5,303.2V330.5M719.5,298.5V326.2M721.5,294.5V320.3M723.5,285.7V312.8M725.5,283.2V308.1M727.5,279.7V304.0M729.5,271.5V301.1M731.5,266.9V296.5M733.5,264.7V291.5M735.5,259.9V284.3M737.5,254.1V280.9M739.5,246.5V275.6M741.5,243.3V269.3M743.5,239.3V267.5M745.5,236.9V261.5M747.5,232.8V258.7M749.5,230.8V255.0M751.5,231.0V253.2M753.5,229.4V250.2M755.5,228.3V255.0M757.5,229.2V256.8M759.5,233.3V255.9M761.5,235.7V261.9M763.5,237.3V264.0M765.5,245.2V268.7M767.5,249.5V274.0M769.5,253.8V277.5M771.5,259.0V285.4M773.5,261.5V289.6M775.5,269.0V292.9M777.5,271.0V297.4M779.5,276.6V304.0M781.5,281.1V308.6M783.5,287.1V311.8M785.5,291.9V317.3" stroke="#1c9c18" stroke-width="1" fill="none"/>
<path d="M282.5,267.9V301.1M284.5,265.6V297.1M286.5,270.6V300.9M288.5,266.8V305.0M290.5,270.0V309.8M292.5,271.2V303.1M294.5,276.1V303.9M296.5,273.6V314.2M298.5,277.9V314.8" stroke="#f8f212" stroke-width="1" fill="none"/>
<path d="M283.5,271.2V298.0M285.5,275.6V301.4M287.5,269.2V300.0M289.5,273.5V298.9M291.5,276.0V305.2M293.5,275.6V305.4M295.5,276.1V305.9M297.5,278.7V310.8" stroke="#d8d008" stroke-width="1" fill="none"/>
<path d="M281.7,482.0 L284.6,515.0 L286.3,536.2 L288.6,538.0 L291.4,544.6 L294.3,529.9 L297.2,540.0 L302.3,548.0 L304.0,498.0 L306.0,442.0 L307.0,437.0 L308.0,442.0 L310.0,498.0 L312.0,528.2 L314.9,540.2 L320.0,526.9 L325.2,540.0 L328.6,557.7 L333.2,529.7 L338.3,536.8 L342.9,552.2 L346.3,546.5 L350.9,557.4 L358.9,522.9 L364.6,535.1 L369.2,541.4 L373.8,535.1 L379.5,559.7 L381.8,539.5 L382.2,541.1 L389.5,556.4 L392.4,541.1 L394.5,550.6 L398.9,546.2 L402.5,540.4 L406.9,549.9 L409.8,537.5 L412.7,549.1 L417.8,544.0 L420.7,545.5 L423.6,539.0 L428.0,539.0 L434.5,548.4 L436.7,546.2 L444.0,544.0 L446.9,546.2 L449.8,544.8 L452.0,550.6 L455.6,542.6 L461.5,531.7 L467.3,560.0 L473.1,536.0 L480.4,542.6 L484.7,561.5 L489.8,533.1 L492.7,547.7 L497.8,528.0 L503.6,539.7 L508.0,544.0 L511.6,541.1 L515.3,539.7 L518.2,538.0 L521.8,545.5 L525.5,542.6 L529.1,552.8 L532.0,544.0 L536.4,557.1 L540.0,547.7 L542.9,544.8 L548.7,555.0 L554.5,545.5 L558.9,548.5 L564.0,536.8 L569.1,554.2 L572.7,557.1 L574.9,574.6 L577.8,551.3 L580.7,546.2 L583.6,543.4 L585.8,542.6 L588.0,550.6 L591.6,560.0 L594.5,549.9 L598.2,544.0 L601.1,548.4 L606.9,539.0 L611.3,538.3 L618.5,552.1 L622.2,549.9 L625.8,544.8 L631.6,557.9 L636.0,554.2 L641.8,555.7 L648.4,545.5 L654.9,586.2 L657.8,544.1 L662.2,555.7 L668.0,540.5 L672.4,552.8 L678.2,548.5 L682.5,558.6 L688.4,549.9 L690.0,552.4 L695.7,543.0 L701.4,565.3 L706.6,569.3 L711.7,548.2 L715.7,540.0 L723.7,535.6 L729.5,564.2 L736.9,575.6 L741.5,560.4 L748.3,547.0 L755.2,562.5 L760.3,547.8 L764.3,555.0 L771.2,544.7 L780.3,555.0 L783.8,545.9 L787.0,553.5" stroke="#aa9e32" stroke-width="1.9" fill="none" stroke-linejoin="round"/>
<path d="M281.7,457.0 L284.6,500.0 L286.3,537.7 L288.6,539.5 L291.4,547.5 L294.3,531.4 L297.2,538.9 L302.3,534.3 L304.0,470.0 L306.0,414.0 L307.0,408.6 L308.0,414.0 L310.0,470.0 L312.0,529.7 L314.9,541.7 L320.0,527.4 L325.2,536.6 L328.6,534.9 L333.2,530.9 L338.3,538.3 L342.9,553.7 L346.3,548.0 L350.9,558.9 L358.9,514.3 L364.6,536.6 L369.2,542.9 L373.8,536.6 L379.5,561.2 L381.8,541.2 L382.2,542.6 L389.5,557.9 L392.4,542.6 L394.5,552.1 L398.9,547.7 L402.5,541.9 L406.9,551.4 L409.8,539.0 L412.7,550.6 L417.8,545.5 L420.7,547.0 L423.6,540.5 L428.0,540.5 L434.5,549.9 L436.7,547.7 L444.0,545.5 L446.9,547.7 L449.8,546.3 L452.0,552.1 L455.6,544.1 L461.5,540.5 L467.3,561.5 L473.1,538.3 L480.4,544.1 L484.7,563.0 L489.8,534.6 L492.7,549.2 L497.8,529.5 L503.6,541.2 L508.0,545.5 L511.6,542.6 L515.3,541.2 L518.2,536.8 L521.8,547.0 L525.5,544.1 L529.1,554.3 L532.0,545.5 L536.4,558.6 L540.0,549.2 L542.9,548.5 L548.7,560.1 L554.5,552.8 L558.9,554.3 L564.0,540.5 L569.1,555.7 L572.7,558.6 L574.9,576.1 L577.8,552.8 L580.7,547.7 L583.6,549.2 L585.8,544.1 L588.0,565.2 L591.6,561.5 L594.5,551.4 L598.2,545.5 L601.1,549.9 L606.9,540.5 L611.3,548.5 L618.5,561.5 L622.2,551.4 L625.8,548.5 L631.6,565.9 L636.0,555.7 L641.8,557.2 L648.4,547.7 L654.9,587.7 L657.8,552.8 L662.2,557.2 L668.0,549.9 L672.4,568.1 L678.2,550.6 L682.5,557.2 L688.4,551.4 L690.0,553.9 L695.7,547.0 L701.4,568.7 L706.6,575.0 L711.7,552.7 L715.7,558.5 L723.7,547.6 L729.5,560.7 L736.9,577.3 L741.5,561.9 L748.3,553.9 L755.2,561.9 L760.3,549.3 L764.3,558.5 L771.2,545.3 L780.3,557.3 L783.8,547.6 L787.0,555.0" stroke="#24881a" stroke-width="1.9" fill="none" stroke-linejoin="round"/>
</g>
<rect x="281.5" y="147.5" width="506" height="459" fill="none" stroke="#e0e0e0"/>
<path d="M527,148 H542 L534.5,156 Z" fill="#f5a623"/>
<path d="M282,279.5 L291,285.5 L282,291.5 Z" fill="#f59a10"/>
<path d="M787,324 L776,331 L787,338 Z" fill="#d8c840"/>
<text x="511.00" y="112.50" font-size="13.08" fill="#e0e0e0" textLength="45.99" lengthAdjust="spacingAndGlyphs">Time (s)</text>
<text x="267.36" y="136.50" font-size="11.63" fill="#e0e0e0" textLength="28.25" lengthAdjust="spacingAndGlyphs">-250u</text>
<text x="318.36" y="136.50" font-size="11.63" fill="#e0e0e0" textLength="28.25" lengthAdjust="spacingAndGlyphs">-200u</text>
<text x="368.36" y="136.50" font-size="11.63" fill="#e0e0e0" textLength="28.25" lengthAdjust="spacingAndGlyphs">-150u</text>
<text x="419.36" y="136.50" font-size="11.63" fill="#e0e0e0" textLength="28.25" lengthAdjust="spacingAndGlyphs">-100u</text>
<text x="472.45" y="136.50" font-size="11.63" fill="#e0e0e0" textLength="22.11" lengthAdjust="spacingAndGlyphs">-50u</text>
<text x="531.43" y="136.50" font-size="11.63" fill="#e0e0e0" textLength="6.14" lengthAdjust="spacingAndGlyphs">0</text>
<text x="576.28" y="136.50" font-size="11.63" fill="#e0e0e0" textLength="18.43" lengthAdjust="spacingAndGlyphs">50u</text>
<text x="623.21" y="136.50" font-size="11.63" fill="#e0e0e0" textLength="24.58" lengthAdjust="spacingAndGlyphs">100u</text>
<text x="674.21" y="136.50" font-size="11.63" fill="#e0e0e0" textLength="24.58" lengthAdjust="spacingAndGlyphs">150u</text>
<text x="724.21" y="136.50" font-size="11.63" fill="#e0e0e0" textLength="24.58" lengthAdjust="spacingAndGlyphs">200u</text>
<text x="775.21" y="136.50" font-size="11.63" fill="#e0e0e0" textLength="24.58" lengthAdjust="spacingAndGlyphs">250u</text>
<text x="256.36" y="151.40" font-size="12.65" fill="#e8e830" textLength="21.65" lengthAdjust="spacingAndGlyphs">60m</text>
<text x="256.36" y="197.40" font-size="12.65" fill="#e8e830" textLength="21.65" lengthAdjust="spacingAndGlyphs">40m</text>
<text x="256.36" y="243.40" font-size="12.65" fill="#e8e830" textLength="21.65" lengthAdjust="spacingAndGlyphs">20m</text>
<text x="271.82" y="289.40" font-size="12.65" fill="#e8e830" textLength="6.19" lengthAdjust="spacingAndGlyphs">0</text>
<text x="252.63" y="335.40" font-size="12.65" fill="#e8e830" textLength="25.35" lengthAdjust="spacingAndGlyphs">-20m</text>
<text x="252.63" y="380.40" font-size="12.65" fill="#e8e830" textLength="25.35" lengthAdjust="spacingAndGlyphs">-40m</text>
<text x="252.63" y="426.40" font-size="12.65" fill="#e8e830" textLength="25.35" lengthAdjust="spacingAndGlyphs">-60m</text>
<text x="252.63" y="472.40" font-size="12.65" fill="#e8e830" textLength="25.35" lengthAdjust="spacingAndGlyphs">-80m</text>
<text x="246.45" y="518.40" font-size="12.65" fill="#e8e830" textLength="31.54" lengthAdjust="spacingAndGlyphs">-100m</text>
<text x="246.45" y="564.40" font-size="12.65" fill="#e8e830" textLength="31.54" lengthAdjust="spacingAndGlyphs">-120m</text>
<text x="246.45" y="610.40" font-size="12.65" fill="#e8e830" textLength="31.54" lengthAdjust="spacingAndGlyphs">-140m</text>
<text x="789.00" y="151.40" font-size="12.65" fill="#9a9c3c" textLength="12.66" lengthAdjust="spacingAndGlyphs">80</text>
<text x="789.00" y="197.40" font-size="12.65" fill="#9a9c3c" textLength="12.66" lengthAdjust="spacingAndGlyphs">60</text>
<text x="789.00" y="243.40" font-size="12.65" fill="#9a9c3c" textLength="12.66" lengthAdjust="spacingAndGlyphs">40</text>
<text x="789.00" y="289.40" font-size="12.65" fill="#9a9c3c" textLength="12.66" lengthAdjust="spacingAndGlyphs">20</text>
<text x="789.00" y="335.40" font-size="12.65" fill="#9a9c3c" textLength="6.33" lengthAdjust="spacingAndGlyphs">0</text>
<text x="789.00" y="380.40" font-size="12.65" fill="#9a9c3c" textLength="16.45" lengthAdjust="spacingAndGlyphs">-20</text>
<text x="789.00" y="426.40" font-size="12.65" fill="#9a9c3c" textLength="16.45" lengthAdjust="spacingAndGlyphs">-40</text>
<text x="789.00" y="472.40" font-size="12.65" fill="#9a9c3c" textLength="16.45" lengthAdjust="spacingAndGlyphs">-60</text>
<text x="789.00" y="518.40" font-size="12.65" fill="#9a9c3c" textLength="16.45" lengthAdjust="spacingAndGlyphs">-80</text>
<text x="789.00" y="564.40" font-size="12.65" fill="#9a9c3c" textLength="22.78" lengthAdjust="spacingAndGlyphs">-100</text>
<text x="789.00" y="610.40" font-size="12.65" fill="#9a9c3c" textLength="22.78" lengthAdjust="spacingAndGlyphs">-120</text>
<text x="278.38" y="623.50" font-size="12.35" fill="#e0e0e0" textLength="6.25" lengthAdjust="spacingAndGlyphs">0</text>
<text x="323.42" y="623.50" font-size="12.35" fill="#e0e0e0" textLength="18.13" lengthAdjust="spacingAndGlyphs">20k</text>
<text x="373.42" y="623.50" font-size="12.35" fill="#e0e0e0" textLength="18.13" lengthAdjust="spacingAndGlyphs">40k</text>
<text x="424.42" y="623.50" font-size="12.35" fill="#e0e0e0" textLength="18.13" lengthAdjust="spacingAndGlyphs">60k</text>
<text x="474.42" y="623.50" font-size="12.35" fill="#e0e0e0" textLength="18.13" lengthAdjust="spacingAndGlyphs">80k</text>
<text x="522.27" y="623.50" font-size="12.35" fill="#e0e0e0" textLength="24.38" lengthAdjust="spacingAndGlyphs">100k</text>
<text x="573.27" y="623.50" font-size="12.35" fill="#e0e0e0" textLength="24.38" lengthAdjust="spacingAndGlyphs">120k</text>
<text x="623.27" y="623.50" font-size="12.35" fill="#e0e0e0" textLength="24.38" lengthAdjust="spacingAndGlyphs">140k</text>
<text x="674.27" y="623.50" font-size="12.35" fill="#e0e0e0" textLength="24.38" lengthAdjust="spacingAndGlyphs">160k</text>
<text x="724.27" y="623.50" font-size="12.35" fill="#e0e0e0" textLength="24.38" lengthAdjust="spacingAndGlyphs">180k</text>
<text x="775.27" y="623.50" font-size="12.35" fill="#e0e0e0" textLength="24.38" lengthAdjust="spacingAndGlyphs">200k</text>
<text x="488.93" y="650.00" font-size="13.08" fill="#e0e0e0" textLength="90.14" lengthAdjust="spacingAndGlyphs">Frequency (Hz)</text>
<text transform="translate(229,376.5) rotate(-90)" x="0" y="0" font-size="13.08" fill="#e8e830" text-anchor="middle">IN (V)</text>
<text transform="translate(823,376) rotate(90)" x="0" y="0" font-size="13.08" fill="#9a9c3c" text-anchor="middle">FFT IN (dB)</text>
<rect x="853" y="76" width="215" height="590" fill="#f0f0f0"/>
<text x="858.25" y="88.75" font-size="10.90" font-weight="bold" fill="#111" textLength="54.45" lengthAdjust="spacingAndGlyphs">Axis View</text>
<circle cx="1052" cy="89" r="10" fill="#1a72b8"/>
<circle cx="1052" cy="89" r="9" fill="#1673bb"/>
<path d="M1048.3,86.1 C1048.3,81.6 1056.1,81.6 1056.1,85.9 C1056.1,88.6 1052.5,89.1 1052.3,91.7" fill="none" stroke="#fff" stroke-width="2.7" stroke-linecap="butt"/>
<rect x="1050.7" y="93.2" width="3" height="3" rx="0.6" fill="#fff"/>
<circle cx="868" cy="107" r="5.6" fill="url(#grad_rb)" stroke="#8f8f8f" stroke-width="1"/>
<circle cx="868" cy="107" r="3.4" fill="url(#grad_rdot)" stroke="#123c5e" stroke-width="0.8"/>
<text x="881.00" y="111.20" font-size="12.79" fill="#000" textLength="10.00" lengthAdjust="spacingAndGlyphs">IN</text>
<circle cx="925" cy="107" r="5.6" fill="url(#grad_rb)" stroke="#8f8f8f" stroke-width="1"/>
<text x="937.70" y="111.20" font-size="12.79" fill="#000" textLength="22.71" lengthAdjust="spacingAndGlyphs">OUT</text>
<rect x="988.5" y="99.5" width="12" height="12" fill="#f4f4f4" stroke="#8f8f8f"/>
<rect x="990.5" y="101.5" width="8" height="8" fill="url(#gchk)" stroke="#c9c9c9" stroke-width="1"/>
<path d="M991.3,105.8 L993.6,108.6 L997.8,102" fill="none" stroke="#3a4a70" stroke-width="1.9"/>
<text x="1007.70" y="111.20" font-size="12.79" fill="#000" textLength="36.52" lengthAdjust="spacingAndGlyphs">Markers</text>
<rect x="853" y="120" width="198" height="1" fill="#a0a0a0"/>
<rect x="853" y="121" width="198" height="1" fill="#ffffff"/>
<text x="858.00" y="132.50" font-size="10.90" font-weight="bold" fill="#111" textLength="39.50" lengthAdjust="spacingAndGlyphs">Trigger</text>
<text x="858.50" y="145.50" font-size="11.63" fill="#000" textLength="38.50" lengthAdjust="spacingAndGlyphs">Channel</text>
<text x="966.00" y="143.75" font-size="11.63" fill="#000" textLength="25.01" lengthAdjust="spacingAndGlyphs">Level</text>
<rect x="857.5" y="148.5" width="98" height="20" rx="2.5" fill="url(#gbtn)" stroke="#707070"/>
<rect x="858.5" y="149.5" width="96" height="18" rx="1.5" fill="none" stroke="#fcfcfc" stroke-opacity="0.7"/>
<path d="M944.0,157.0 h7 l-3.5,4 z" fill="#000"/>
<text x="859.50" y="162.50" font-size="12.35" fill="#000" textLength="23.01" lengthAdjust="spacingAndGlyphs">OUT</text>
<rect x="964" y="146" width="98" height="20" fill="#ffffff"/>
<rect x="964.5" y="146.5" width="97" height="19" fill="none" stroke="#e3e5ea"/>
<rect x="964" y="146" width="98" height="1" fill="#b4b6bc"/>
<rect x="964" y="146" width="1" height="20" fill="#d6d8dd"/>
<path d="M1050.0,154.5 h7 l-3.5,4 z" fill="#000"/>
<text x="966.00" y="160.00" font-size="11.63" fill="#000" textLength="23.99" lengthAdjust="spacingAndGlyphs">0 mV</text>
<text x="859.40" y="184.00" font-size="11.63" fill="#000" textLength="25.62" lengthAdjust="spacingAndGlyphs">Mode</text>
<text x="964.40" y="185.00" font-size="11.63" fill="#000" textLength="23.01" lengthAdjust="spacingAndGlyphs">Edge</text>
<rect x="856.5" y="187.5" width="99" height="19" rx="2.5" fill="url(#gbtn)" stroke="#707070"/>
<rect x="857.5" y="188.5" width="97" height="17" rx="1.5" fill="none" stroke="#fcfcfc" stroke-opacity="0.7"/>
<path d="M944.0,195.5 h7 l-3.5,4 z" fill="#000"/>
<text x="860.60" y="201.00" font-size="12.35" fill="#000" textLength="31.38" lengthAdjust="spacingAndGlyphs">Normal</text>
<rect x="961.5" y="188.5" width="99" height="19" rx="2.5" fill="url(#gbtn)" stroke="#707070"/>
<rect x="962.5" y="189.5" width="97" height="17" rx="1.5" fill="none" stroke="#fcfcfc" stroke-opacity="0.7"/>
<path d="M1049.0,196.5 h7 l-3.5,4 z" fill="#000"/>
<text x="966.00" y="202.00" font-size="12.35" fill="#000" textLength="26.99" lengthAdjust="spacingAndGlyphs">Rising</text>
<rect x="853" y="215" width="199" height="1" fill="#a0a0a0"/>
<rect x="853" y="216" width="199" height="1" fill="#ffffff"/>
<text x="858.50" y="228.00" font-size="10.90" font-weight="bold" fill="#111" textLength="56.99" lengthAdjust="spacingAndGlyphs">Time Base</text>
<text x="859.00" y="240.50" font-size="11.63" fill="#000" textLength="31.02" lengthAdjust="spacingAndGlyphs">Range</text>
<text x="963.50" y="240.50" font-size="11.63" fill="#000" textLength="27.49" lengthAdjust="spacingAndGlyphs">Offset</text>
<rect x="856" y="243" width="99" height="20" fill="#ffffff"/>
<rect x="856.5" y="243.5" width="98" height="19" fill="none" stroke="#e3e5ea"/>
<rect x="856" y="243" width="99" height="1" fill="#b4b6bc"/>
<rect x="856" y="243" width="1" height="20" fill="#d6d8dd"/>
<path d="M943.0,251.5 h7 l-3.5,4 z" fill="#000"/>
<text x="859.00" y="256.40" font-size="11.63" fill="#000" textLength="43.97" lengthAdjust="spacingAndGlyphs">50 us/div</text>
<rect x="961" y="243" width="99" height="20" fill="#ffffff"/>
<rect x="961.5" y="243.5" width="98" height="19" fill="none" stroke="#e3e5ea"/>
<rect x="961" y="243" width="99" height="1" fill="#b4b6bc"/>
<rect x="961" y="243" width="1" height="20" fill="#d6d8dd"/>
<path d="M1048.0,251.5 h7 l-3.5,4 z" fill="#000"/>
<text x="964.00" y="256.40" font-size="11.63" fill="#000" textLength="21.52" lengthAdjust="spacingAndGlyphs">0 div</text>
<text x="860.60" y="276.50" font-size="11.63" fill="#a0a0a0" textLength="53.39" lengthAdjust="spacingAndGlyphs">CycleCount</text>
<rect x="858.5" y="278.5" width="99" height="19" rx="2" fill="#f4f4f4" stroke="#adb2b5"/>
<path d="M946,286.5 h7 l-3.5,4 z" fill="#a0a0a0"/>
<text x="862.40" y="293.00" font-size="11.63" fill="#a0a0a0" textLength="39.61" lengthAdjust="spacingAndGlyphs">Minimum</text>
<rect x="963.5" y="282.5" width="12" height="12" fill="#f4f4f4" stroke="#8f8f8f"/>
<rect x="965.5" y="284.5" width="8" height="8" fill="url(#gchk)" stroke="#c9c9c9" stroke-width="1"/>
<text x="982.50" y="292.80" font-size="11.63" fill="#000" textLength="45.52" lengthAdjust="spacingAndGlyphs">Autoscale</text>
<rect x="853" y="305" width="199" height="1" fill="#a0a0a0"/>
<rect x="853" y="306" width="199" height="1" fill="#ffffff"/>
<text x="858.50" y="318.00" font-size="10.90" font-weight="bold" fill="#111" textLength="9.00" lengthAdjust="spacingAndGlyphs">IN</text>
<text x="859.00" y="330.60" font-size="11.63" fill="#000" textLength="31.02" lengthAdjust="spacingAndGlyphs">Range</text>
<text x="963.50" y="330.60" font-size="11.63" fill="#000" textLength="27.49" lengthAdjust="spacingAndGlyphs">Offset</text>
<rect x="856" y="333" width="99" height="20" fill="#ffffff"/>
<rect x="856.5" y="333.5" width="98" height="19" fill="none" stroke="#e3e5ea"/>
<rect x="856" y="333" width="99" height="1" fill="#b4b6bc"/>
<rect x="856" y="333" width="1" height="20" fill="#d6d8dd"/>
<path d="M943.0,341.5 h7 l-3.5,4 z" fill="#000"/>
<text x="859.00" y="347.00" font-size="11.63" fill="#000" textLength="49.62" lengthAdjust="spacingAndGlyphs">20 mV/div</text>
<rect x="961" y="333" width="99" height="20" fill="#ffffff"/>
<rect x="961.5" y="333.5" width="98" height="19" fill="none" stroke="#e3e5ea"/>
<rect x="961" y="333" width="99" height="1" fill="#b4b6bc"/>
<rect x="961" y="333" width="1" height="20" fill="#d6d8dd"/>
<path d="M1048.0,341.5 h7 l-3.5,4 z" fill="#000"/>
<text x="964.00" y="347.00" font-size="11.63" fill="#000" textLength="21.52" lengthAdjust="spacingAndGlyphs">2 div</text>
<rect x="858.5" y="358.5" width="12" height="12" fill="#f4f4f4" stroke="#8f8f8f"/>
<rect x="860.5" y="360.5" width="8" height="8" fill="url(#gchk)" stroke="#c9c9c9" stroke-width="1"/>
<path d="M861.3,364.8 L863.6,367.6 L867.8,361" fill="none" stroke="#3a4a70" stroke-width="1.9"/>
<text x="877.40" y="368.60" font-size="11.63" fill="#000" textLength="31.59" lengthAdjust="spacingAndGlyphs">Enable</text>
<rect x="961.5" y="358.5" width="12" height="12" fill="#f4f4f4" stroke="#8f8f8f"/>
<rect x="963.5" y="360.5" width="8" height="8" fill="url(#gchk)" stroke="#c9c9c9" stroke-width="1"/>
<text x="980.60" y="368.60" font-size="11.63" fill="#000" textLength="45.52" lengthAdjust="spacingAndGlyphs">Autoscale</text>
<rect x="853" y="375" width="199" height="1" fill="#a0a0a0"/>
<rect x="853" y="376" width="199" height="1" fill="#ffffff"/>
<text x="858.40" y="388.00" font-size="10.90" font-weight="bold" fill="#111" textLength="21.01" lengthAdjust="spacingAndGlyphs">OUT</text>
<text x="859.00" y="401.30" font-size="11.63" fill="#000" textLength="31.02" lengthAdjust="spacingAndGlyphs">Range</text>
<text x="963.50" y="401.30" font-size="11.63" fill="#000" textLength="27.49" lengthAdjust="spacingAndGlyphs">Offset</text>
<rect x="856" y="403" width="99" height="20" fill="#ffffff"/>
<rect x="856.5" y="403.5" width="98" height="19" fill="none" stroke="#e3e5ea"/>
<rect x="856" y="403" width="99" height="1" fill="#b4b6bc"/>
<rect x="856" y="403" width="1" height="20" fill="#d6d8dd"/>
<path d="M943.0,411.5 h7 l-3.5,4 z" fill="#000"/>
<text x="859.00" y="417.00" font-size="11.63" fill="#000" textLength="47.49" lengthAdjust="spacingAndGlyphs">20 mv/div</text>
<rect x="961" y="403" width="99" height="20" fill="#ffffff"/>
<rect x="961.5" y="403.5" width="98" height="19" fill="none" stroke="#e3e5ea"/>
<rect x="961" y="403" width="99" height="1" fill="#b4b6bc"/>
<rect x="961" y="403" width="1" height="20" fill="#d6d8dd"/>
<path d="M1048.0,411.5 h7 l-3.5,4 z" fill="#000"/>
<text x="964.00" y="417.00" font-size="11.63" fill="#000" textLength="21.52" lengthAdjust="spacingAndGlyphs">2 div</text>
<rect x="862.5" y="428.5" width="12" height="12" fill="#f4f4f4" stroke="#8f8f8f"/>
<rect x="864.5" y="430.5" width="8" height="8" fill="url(#gchk)" stroke="#c9c9c9" stroke-width="1"/>
<path d="M865.3,434.8 L867.6,437.6 L871.8,431" fill="none" stroke="#3a4a70" stroke-width="1.9"/>
<text x="881.40" y="438.50" font-size="11.63" fill="#000" textLength="31.59" lengthAdjust="spacingAndGlyphs">Enable</text>
<rect x="961.5" y="428.5" width="12" height="12" fill="#f4f4f4" stroke="#8f8f8f"/>
<rect x="963.5" y="430.5" width="8" height="8" fill="url(#gchk)" stroke="#c9c9c9" stroke-width="1"/>
<text x="980.30" y="438.50" font-size="11.63" fill="#000" textLength="45.52" lengthAdjust="spacingAndGlyphs">Autoscale</text>
<rect x="853" y="447" width="199" height="1" fill="#a0a0a0"/>
<rect x="853" y="448" width="199" height="1" fill="#ffffff"/>
<text x="858.40" y="460.50" font-size="10.90" font-weight="bold" fill="#111" textLength="79.47" lengthAdjust="spacingAndGlyphs">FFT Frequency</text>
<text x="859.00" y="474.40" font-size="11.63" fill="#000" textLength="40.01" lengthAdjust="spacingAndGlyphs">Minimum</text>
<text x="964.50" y="474.40" font-size="11.63" fill="#000" textLength="42.99" lengthAdjust="spacingAndGlyphs">Maximum</text>
<rect x="856" y="476" width="99" height="20" fill="#ffffff"/>
<rect x="856.5" y="476.5" width="98" height="19" fill="none" stroke="#e3e5ea"/>
<rect x="856" y="476" width="99" height="1" fill="#b4b6bc"/>
<rect x="856" y="476" width="1" height="20" fill="#d6d8dd"/>
<path d="M943.0,484.5 h7 l-3.5,4 z" fill="#000"/>
<text x="859.00" y="490.00" font-size="11.63" fill="#000" textLength="21.01" lengthAdjust="spacingAndGlyphs">0 Hz</text>
<rect x="961" y="476" width="99" height="20" fill="#ffffff"/>
<rect x="961.5" y="476.5" width="98" height="19" fill="none" stroke="#e3e5ea"/>
<rect x="961" y="476" width="99" height="1" fill="#b4b6bc"/>
<rect x="961" y="476" width="1" height="20" fill="#d6d8dd"/>
<path d="M1048.0,484.5 h7 l-3.5,4 z" fill="#000"/>
<text x="964.00" y="490.00" font-size="11.63" fill="#000" textLength="39.48" lengthAdjust="spacingAndGlyphs">200 kHz</text>
<rect x="961.5" y="500.5" width="12" height="12" fill="#f4f4f4" stroke="#8f8f8f"/>
<rect x="963.5" y="502.5" width="8" height="8" fill="url(#gchk)" stroke="#c9c9c9" stroke-width="1"/>
<text x="980.30" y="510.50" font-size="11.63" fill="#000" textLength="45.52" lengthAdjust="spacingAndGlyphs">Autoscale</text>
<rect x="853" y="517" width="199" height="1" fill="#a0a0a0"/>
<rect x="853" y="518" width="199" height="1" fill="#ffffff"/>
<text x="858.40" y="529.70" font-size="10.90" font-weight="bold" fill="#111" textLength="33.50" lengthAdjust="spacingAndGlyphs">IN FFT</text>
<text x="859.00" y="543.00" font-size="11.63" fill="#000" textLength="31.02" lengthAdjust="spacingAndGlyphs">Range</text>
<text x="963.50" y="543.00" font-size="11.63" fill="#000" textLength="27.49" lengthAdjust="spacingAndGlyphs">Offset</text>
<rect x="856" y="545" width="99" height="20" fill="#ffffff"/>
<rect x="856.5" y="545.5" width="98" height="19" fill="none" stroke="#e3e5ea"/>
<rect x="856" y="545" width="99" height="1" fill="#b4b6bc"/>
<rect x="856" y="545" width="1" height="20" fill="#d6d8dd"/>
<path d="M943.0,553.5 h7 l-3.5,4 z" fill="#000"/>
<text x="859.00" y="559.00" font-size="11.63" fill="#000" textLength="46.49" lengthAdjust="spacingAndGlyphs">20 dB/div</text>
<rect x="961" y="545" width="99" height="20" fill="#ffffff"/>
<rect x="961.5" y="545.5" width="98" height="19" fill="none" stroke="#e3e5ea"/>
<rect x="961" y="545" width="99" height="1" fill="#b4b6bc"/>
<rect x="961" y="545" width="1" height="20" fill="#d6d8dd"/>
<path d="M1048.0,553.5 h7 l-3.5,4 z" fill="#000"/>
<text x="964.00" y="559.00" font-size="11.63" fill="#000" textLength="25.00" lengthAdjust="spacingAndGlyphs">1  div</text>
<rect x="862.5" y="569.5" width="12" height="12" fill="#f4f4f4" stroke="#8f8f8f"/>
<rect x="864.5" y="571.5" width="8" height="8" fill="url(#gchk)" stroke="#c9c9c9" stroke-width="1"/>
<path d="M865.3,575.8 L867.6,578.6 L871.8,572" fill="none" stroke="#3a4a70" stroke-width="1.9"/>
<text x="881.40" y="580.30" font-size="11.63" fill="#000" textLength="31.59" lengthAdjust="spacingAndGlyphs">Enable</text>
<rect x="961.5" y="569.5" width="12" height="12" fill="#f4f4f4" stroke="#8f8f8f"/>
<rect x="963.5" y="571.5" width="8" height="8" fill="url(#gchk)" stroke="#c9c9c9" stroke-width="1"/>
<text x="980.30" y="580.30" font-size="11.63" fill="#000" textLength="45.52" lengthAdjust="spacingAndGlyphs">Autoscale</text>
<rect x="853" y="587" width="199" height="1" fill="#a0a0a0"/>
<rect x="853" y="588" width="199" height="1" fill="#ffffff"/>
<text x="858.40" y="600.00" font-size="10.90" font-weight="bold" fill="#111" textLength="43.51" lengthAdjust="spacingAndGlyphs">OUT FFT</text>
<text x="859.00" y="613.20" font-size="11.63" fill="#000" textLength="31.02" lengthAdjust="spacingAndGlyphs">Range</text>
<text x="963.50" y="613.20" font-size="11.63" fill="#000" textLength="27.49" lengthAdjust="spacingAndGlyphs">Offset</text>
<rect x="856" y="615" width="99" height="20" fill="#ffffff"/>
<rect x="856.5" y="615.5" width="98" height="19" fill="none" stroke="#e3e5ea"/>
<rect x="856" y="615" width="99" height="1" fill="#b4b6bc"/>
<rect x="856" y="615" width="1" height="20" fill="#d6d8dd"/>
<path d="M943.0,623.5 h7 l-3.5,4 z" fill="#000"/>
<text x="859.00" y="629.00" font-size="11.63" fill="#000" textLength="46.49" lengthAdjust="spacingAndGlyphs">20 dB/div</text>
<rect x="961" y="615" width="99" height="20" fill="#ffffff"/>
<rect x="961.5" y="615.5" width="98" height="19" fill="none" stroke="#e3e5ea"/>
<rect x="961" y="615" width="99" height="1" fill="#b4b6bc"/>
<rect x="961" y="615" width="1" height="20" fill="#d6d8dd"/>
<path d="M1048.0,623.5 h7 l-3.5,4 z" fill="#000"/>
<text x="964.00" y="629.00" font-size="11.63" fill="#000" textLength="25.00" lengthAdjust="spacingAndGlyphs">1  div</text>
<rect x="862.5" y="639.5" width="12" height="12" fill="#f4f4f4" stroke="#8f8f8f"/>
<rect x="864.5" y="641.5" width="8" height="8" fill="url(#gchk)" stroke="#c9c9c9" stroke-width="1"/>
<path d="M865.3,645.8 L867.6,648.6 L871.8,642" fill="none" stroke="#3a4a70" stroke-width="1.9"/>
<text x="881.40" y="649.50" font-size="11.63" fill="#000" textLength="31.59" lengthAdjust="spacingAndGlyphs">Enable</text>
<rect x="961.5" y="639.5" width="12" height="12" fill="#f4f4f4" stroke="#8f8f8f"/>
<rect x="963.5" y="641.5" width="8" height="8" fill="url(#gchk)" stroke="#c9c9c9" stroke-width="1"/>
<text x="980.30" y="649.50" font-size="11.63" fill="#000" textLength="45.52" lengthAdjust="spacingAndGlyphs">Autoscale</text>
<rect x="1068" y="76" width="20" height="590" fill="#f0f0f0"/>
<rect x="1068.5" y="76.5" width="19" height="589" fill="#f4f4f4" stroke="#6d6d6d"/>
<text transform="translate(1074.25,82.60) rotate(90)" x="0" y="0" font-size="12.35" fill="#111" textLength="37.21" lengthAdjust="spacingAndGlyphs">GRAPH</text>
<text transform="translate(1074.25,132.90) rotate(90)" x="0" y="0" font-size="12.35" fill="#111" textLength="52.81" lengthAdjust="spacingAndGlyphs">CURSORS</text>
<text transform="translate(1074.25,198.60) rotate(90)" x="0" y="0" font-size="12.35" fill="#111" textLength="51.42" lengthAdjust="spacingAndGlyphs">ANALYSIS</text>
<rect x="8" y="669" width="1084" height="23" fill="#f0edea"/>
<rect x="8" y="669" width="1084" height="1" fill="#ffffff"/>
<rect x="8" y="670" width="1084" height="1" fill="#a0a0a0"/>
<text x="12.50" y="686.00" font-size="13.08" fill="#1a1a1a" textLength="181.52" lengthAdjust="spacingAndGlyphs">Analog Devices M2k Rev.D (Z7010)</text>
<text x="201.00" y="686.00" font-size="13.08" fill="#1a1a1a" textLength="44.94" lengthAdjust="spacingAndGlyphs">LB3031A</text>
<text x="252.70" y="686.00" font-size="13.08" fill="#1a1a1a" textLength="97.28" lengthAdjust="spacingAndGlyphs">50A Current Probe</text>
<text x="357.00" y="686.00" font-size="13.08" fill="#1a1a1a" textLength="98.78" lengthAdjust="spacingAndGlyphs">Vout=1.49V T=26C</text>
<text x="467.70" y="686.00" font-size="13.08" fill="#1a1a1a" textLength="19.13" lengthAdjust="spacingAndGlyphs">Idle</text>
<rect x="1087" y="678" width="2" height="2" fill="#a0a0a0"/>
<rect x="1083" y="682" width="2" height="2" fill="#a0a0a0"/>
<rect x="1087" y="682" width="2" height="2" fill="#a0a0a0"/>
<rect x="1079" y="686" width="2" height="2" fill="#a0a0a0"/>
<rect x="1083" y="686" width="2" height="2" fill="#a0a0a0"/>
<rect x="1087" y="686" width="2" height="2" fill="#a0a0a0"/>
<rect x="7.5" y="29.5" width="1085" height="663" fill="none" stroke="#2a4c6b"/>
</svg></body></html>
